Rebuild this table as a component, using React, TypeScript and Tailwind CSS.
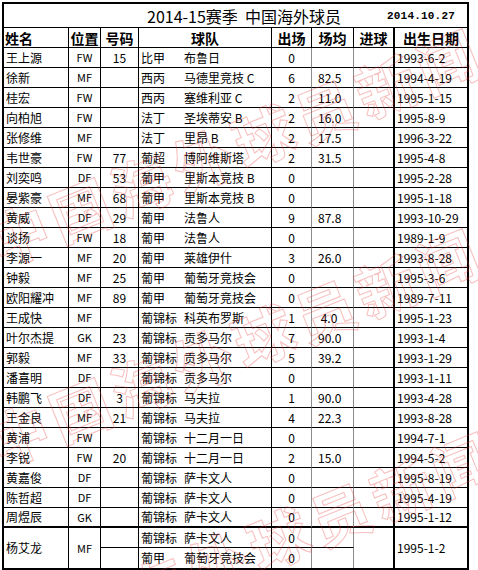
import React from "react";

type Row = [string, string, string, string, string, string, string, string, string];

const rows: Row[] = [
  ["王上源", "FW", "15", "比甲", "布鲁日", "0", "", "", "1993-6-2"],
  ["徐新", "MF", "", "西丙", "马德里竞技 C", "6", "82.5", "", "1994-4-19"],
  ["桂宏", "FW", "", "西丙", "塞维利亚 C", "2", "11.0", "", "1995-1-15"],
  ["向柏旭", "FW", "", "法丁", "圣埃蒂安 B", "2", "16.0", "", "1995-8-9"],
  ["张修维", "MF", "", "法丁", "里昂 B", "2", "17.5", "", "1996-3-22"],
  ["韦世豪", "FW", "77", "葡超", "博阿维斯塔", "2", "31.5", "", "1995-4-8"],
  ["刘奕鸣", "DF", "53", "葡甲", "里斯本竞技 B", "0", "", "", "1995-2-28"],
  ["晏紫豪", "MF", "68", "葡甲", "里斯本竞技 B", "0", "", "", "1995-1-18"],
  ["黄威", "DF", "29", "葡甲", "法鲁人", "9", "87.8", "", "1993-10-29"],
  ["谈扬", "FW", "18", "葡甲", "法鲁人", "0", "", "", "1989-1-9"],
  ["李源一", "MF", "20", "葡甲", "莱雄伊什", "3", "26.0", "", "1993-8-28"],
  ["钟毅", "MF", "25", "葡甲", "葡萄牙竞技会", "0", "", "", "1995-3-6"],
  ["欧阳耀冲", "MF", "89", "葡甲", "葡萄牙竞技会", "0", "", "", "1989-7-11"],
  ["王成快", "MF", "", "葡锦标", "科英布罗斯", "1", " 4.0", "", "1995-1-23"],
  ["叶尔杰提", "GK", "23", "葡锦标", "贡多马尔", "7", "90.0", "", "1993-1-4"],
  ["郭毅", "MF", "33", "葡锦标", "贡多马尔", "5", "39.2", "", "1993-1-29"],
  ["潘喜明", "DF", "", "葡锦标", "贡多马尔", "0", "", "", "1993-1-11"],
  ["韩鹏飞", "DF", "3", "葡锦标", "马夫拉", "1", "90.0", "", "1993-4-28"],
  ["王金良", "MF", "21", "葡锦标", "马夫拉", "4", "22.3", "", "1993-8-28"],
  ["黄浦", "FW", "", "葡锦标", "十二月一日", "0", "", "", "1994-7-1"],
  ["李锐", "FW", "20", "葡锦标", "十二月一日", "2", "15.0", "", "1994-5-2"],
  ["黄嘉俊", "DF", "", "葡锦标", "萨卡文人", "0", "", "", "1995-8-19"],
  ["陈哲超", "DF", "", "葡锦标", "萨卡文人", "0", "", "", "1995-4-19"],
  ["周煜辰", "GK", "", "葡锦标", "萨卡文人", "0", "", "", "1995-1-12"],
];

const cell = "flex items-center overflow-hidden whitespace-nowrap border-b border-b-black";

function BodyRow({ r, thick }: { r: Row; thick?: boolean }) {
  const b = thick ? "border-b-2" : "";
  return (
    <>
      <div className={`${cell} ${b} border-r border-r-black pl-[2px]`}>{r[0]}</div>
      <div className={`${cell} ${b} border-r border-r-black justify-center text-[11px]`}>{r[1]}</div>
      <div className={`${cell} ${b} border-r border-r-black justify-center`}>{r[2]}</div>
      <div className={`${cell} ${b} pl-[2px]`}>{r[3]}</div>
      <div className={`${cell} ${b} border-r border-r-black`}>{r[4]}</div>
      <div className={`${cell} ${b} border-r border-r-[#8c8c8c] justify-center`}>{r[5]}</div>
      <div className={`${cell} ${b} border-r border-r-[#8c8c8c] pl-[6px] whitespace-pre`}>{r[6]}</div>
      <div className={`${cell} ${b} border-r-2 border-r-black`}>{r[7]}</div>
      <div className={`${cell} ${b} pl-[2px]`}>{r[8]}</div>
    </>
  );
}

function Watermark({ x, y }: { x: number; y: number }) {
  return (
    <div
      aria-hidden="true"
      className="absolute -translate-x-1/2 -translate-y-1/2 rotate-[-22deg] whitespace-nowrap text-[60px] font-bold leading-none tracking-[6px] text-transparent [-webkit-text-stroke:1.1px_rgba(230,50,50,0.3)] pointer-events-none select-none"
      style={{ left: x, top: y }}
    >
      中国海外球员新闻
    </div>
  );
}

export default function App() {
  return (
    <div className="relative w-[478px] h-[570px] overflow-hidden bg-white text-black font-['Noto_Sans_CJK_SC',sans-serif]">
      <div className="ml-[2px] mt-[2px] w-fit border-2 border-black grid grid-cols-[65px_32px_38px_45px_88px_40px_42px_41px_72px] grid-rows-[24px] auto-rows-[20px] text-[12px] leading-none">
        {/* title row */}
        <div className="col-span-9 flex items-center border-b border-b-black">
          <span className="pl-[143px] text-[16px] whitespace-pre">2014-15赛季  中国海外球员</span>
          <span className="ml-auto pr-[12px] pt-[2px] text-[11px] font-bold font-['Liberation_Mono',monospace] tracking-[0.2px]">
            2014.10.27
          </span>
        </div>
        {/* header row */}
        <div className={`${cell} border-r border-r-black pl-[1px] text-[14px] font-bold`}>姓名</div>
        <div className={`${cell} border-r border-r-black justify-center text-[14px] font-bold`}>位置</div>
        <div className={`${cell} border-r border-r-black justify-center text-[14px] font-bold`}>号码</div>
        <div className={`${cell} col-span-2 border-r border-r-black justify-center text-[14px] font-bold`}>球队</div>
        <div className={`${cell} border-r border-r-black justify-center text-[14px] font-bold`}>出场</div>
        <div className={`${cell} border-r border-r-black justify-center text-[14px] font-bold`}>场均</div>
        <div className={`${cell} border-r-2 border-r-black justify-center text-[14px] font-bold`}>进球</div>
        <div className={`${cell} justify-center text-[14px] font-bold`}>出生日期</div>
        {/* body */}
        {rows.map((r, i) => (
          <BodyRow key={i} r={r} thick={i === rows.length - 1} />
        ))}
        {/* 杨艾龙: two sub-rows */}
        <div className="row-span-2 flex items-center border-r border-r-black pl-[2px]">杨艾龙</div>
        <div className="row-span-2 flex items-center justify-center border-r border-r-black text-[11px]">MF</div>
        <div className={`${cell} border-r border-r-black`}></div>
        <div className={`${cell} pl-[2px]`}>葡锦标</div>
        <div className={`${cell} border-r border-r-black`}>萨卡文人</div>
        <div className={`${cell} border-r border-r-[#8c8c8c] justify-center`}>0</div>
        <div className={`${cell} border-r border-r-[#8c8c8c]`}></div>
        <div className="row-span-2 border-r-2 border-r-black"></div>
        <div className="row-span-2 flex items-center pl-[2px]">1995-1-2</div>
        <div className="flex items-center border-r border-r-black"></div>
        <div className="flex items-center pl-[2px]">葡甲</div>
        <div className="flex items-center whitespace-nowrap border-r border-r-black">葡萄牙竞技会</div>
        <div className="flex items-center justify-center border-r border-r-[#8c8c8c]">0</div>
        <div className="flex items-center border-r border-r-[#8c8c8c]"></div>
      </div>
      <Watermark x={235} y={145} />
      <Watermark x={235} y={345} />
      <Watermark x={250} y={548} />
    </div>
  );
}
